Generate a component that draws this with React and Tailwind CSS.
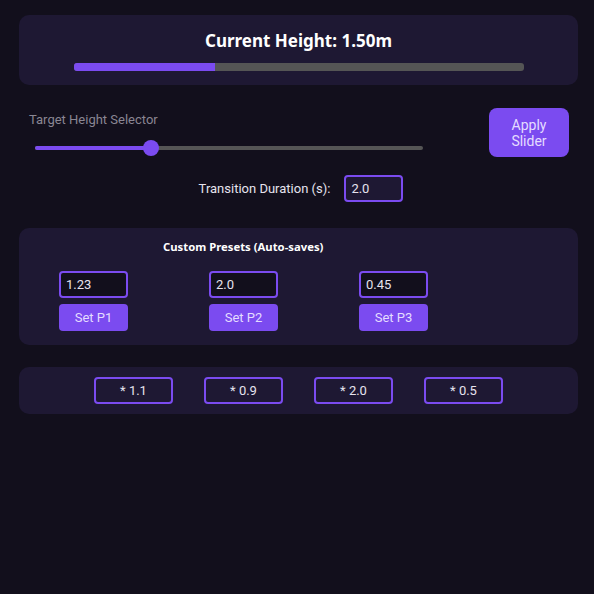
import React, { useState } from "react";

const presets = [
  { value: "1.23", label: "Set P1" },
  { value: "2.0", label: "Set P2" },
  { value: "0.45", label: "Set P3" },
];

const multipliers = ["* 1.1", "* 0.9", "* 2.0", "* 0.5"];

export default function App() {
  const [height] = useState(1.5);
  const [target, setTarget] = useState(30);
  const [duration, setDuration] = useState("2.0");
  const [values, setValues] = useState(presets.map((p) => p.value));

  return (
    <div
      className="min-h-[594px] w-full bg-[#120f1c] pl-[19px] pr-[16px] pt-[15px] text-white"
      style={{ fontFamily: "Roboto, 'Liberation Sans', sans-serif" }}
    >
      {/* Current height readout */}
      <div className="flex h-[70px] flex-col items-center rounded-[10px] bg-[#1e1833] pt-[15px]">
        <h1
          className="text-[17px] font-bold leading-[22px] text-white"
          style={{ fontFamily: "'Noto Sans', sans-serif" }}
        >
          Current Height: {height.toFixed(2)}m
        </h1>
        <div className="mt-[11px] h-[8px] w-[450px] overflow-hidden rounded-[3px] bg-[#555555]">
          <div className="h-full bg-[#7b4bf0]" style={{ width: "31.5%" }} />
        </div>
      </div>

      {/* Target slider and apply */}
      <div className="mt-[23px] flex items-start">
        <div className="flex w-[470px] flex-col pl-[10px] pt-[4px]">
          <span className="text-[13px] leading-[16px] text-[#8a8693]">Target Height Selector</span>
          <div className="relative ml-[6px] mt-[12px] h-[16px] w-[388px]">
            <div className="absolute left-0 right-0 top-[6px] h-[4px] rounded-full bg-[#555555]" />
            <div
              className="absolute left-0 top-[6px] h-[4px] rounded-full bg-[#7b4bf0]"
              style={{ width: `${target}%` }}
            />
            <div
              className="absolute top-0 h-[16px] w-[16px] -translate-x-1/2 rounded-full bg-[#7b4bf0]"
              style={{ left: `${target}%` }}
            />
            <input
              type="range"
              min="0"
              max="100"
              value={target}
              onChange={(e) => setTarget(Number(e.target.value))}
              className="absolute inset-0 h-full w-full cursor-pointer opacity-0"
            />
          </div>
        </div>
        <button className="ml-auto mr-[9px] flex h-[49px] w-[80px] flex-col items-center justify-center rounded-[8px] bg-[#7b4bf0] text-[14px] leading-[16px] text-[#e4dcff]">
          <span>Apply</span>
          <span>Slider</span>
        </button>
      </div>

      {/* Transition duration */}
      <div className="mt-[18px] flex items-center justify-center gap-[14px] pl-[5px]">
        <label className="text-[13px] text-[#e6e3ee]">Transition Duration (s):</label>
        <input
          value={duration}
          onChange={(e) => setDuration(e.target.value)}
          className="h-[27px] w-[59px] rounded-[4px] border-2 border-[#7b4bf0] bg-[#1e1833] px-[5px] text-[13px] text-[#e6e3ee] outline-none"
        />
      </div>

      {/* Custom presets */}
      <div className="mt-[26px] flex h-[117px] flex-col rounded-[10px] bg-[#1e1833] pl-[40px] pt-[11px]">
        <h2
          className="ml-[104px] text-[11.3px] font-bold leading-[16px] text-white"
          style={{ fontFamily: "'Noto Sans', sans-serif" }}
        >
          Custom Presets (Auto-saves)
        </h2>
        <div className="mt-[16px] flex gap-[81px]">
          {presets.map((p, i) => (
            <div key={p.label} className="flex w-[69px] flex-col gap-[6px]">
              <input
                value={values[i]}
                onChange={(e) =>
                  setValues(values.map((v, j) => (j === i ? e.target.value : v)))
                }
                className="h-[27px] w-[69px] rounded-[4px] border-2 border-[#7b4bf0] bg-[#120f1c] px-[5px] text-[13px] text-[#e6e3ee] outline-none"
              />
              <button className="h-[27px] w-[69px] rounded-[4px] bg-[#7b4bf0] text-[13px] text-[#e4dcff]">
                {p.label}
              </button>
            </div>
          ))}
        </div>
      </div>

      {/* Quick multipliers */}
      <div className="mt-[22px] flex h-[47px] items-center justify-center gap-[31px] rounded-[10px] bg-[#1e1833]">
        {multipliers.map((m) => (
          <button
            key={m}
            className="h-[27px] w-[79px] rounded-[4px] border-2 border-[#7b4bf0] bg-[#1e1833] text-[13px] text-[#e6e3ee]"
          >
            {m}
          </button>
        ))}
      </div>
    </div>
  );
}
